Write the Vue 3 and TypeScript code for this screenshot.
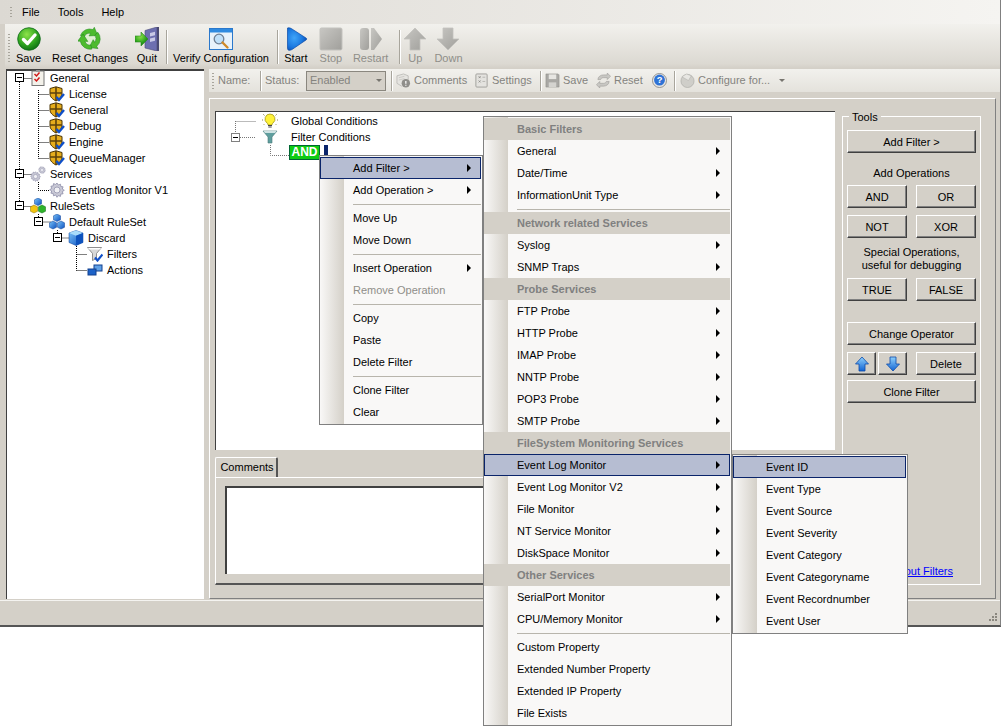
<script setup lang="ts">
type MenuRow = { t: 'item' | 'sep' | 'head'; label?: string; arrow?: boolean; active?: boolean; disabled?: boolean }
const it = (label: string, arrow = false, active = false, disabled = false): MenuRow => ({ t: 'item', label, arrow, active, disabled })
const sep: MenuRow = { t: 'sep' }
const head = (label: string): MenuRow => ({ t: 'head', label })

const contextMenu: MenuRow[] = [
  it('Add Filter >', true, true), it('Add Operation >', true), sep,
  it('Move Up'), it('Move Down'), sep,
  it('Insert Operation', true), it('Remove Operation', false, false, true), sep,
  it('Copy'), it('Paste'), it('Delete Filter'), sep,
  it('Clone Filter'), it('Clear')
]
const filterMenu: MenuRow[] = [
  head('Basic Filters'), it('General', true), it('Date/Time', true), it('InformationUnit Type', true), sep,
  head('Network related Services'), it('Syslog', true), it('SNMP Traps', true),
  head('Probe Services'), it('FTP Probe', true), it('HTTP Probe', true), it('IMAP Probe', true), it('NNTP Probe', true), it('POP3 Probe', true), it('SMTP Probe', true),
  head('FileSystem Monitoring Services'), it('Event Log Monitor', true, true), it('Event Log Monitor V2', true), it('File Monitor', true), it('NT Service Monitor', true), it('DiskSpace Monitor', true),
  head('Other Services'), it('SerialPort Monitor', true), it('CPU/Memory Monitor', true), sep,
  it('Custom Property'), it('Extended Number Property'), it('Extended IP Property'), it('File Exists')
]
const eventMenu: MenuRow[] = [
  it('Event ID', false, true), it('Event Type'), it('Event Source'), it('Event Severity'),
  it('Event Category'), it('Event Categoryname'), it('Event Recordnumber'), it('Event User')
]
const menus = [
  { cls: 'menu-context', rows: contextMenu },
  { cls: 'menu-filter', rows: filterMenu },
  { cls: 'menu-event', rows: eventMenu }
]

const treeRows = [
  { label: 'General', icon: 'i-check', depth: 0, box: true },
  { label: 'License', icon: 'i-shield', depth: 1 },
  { label: 'General', icon: 'i-shield', depth: 1 },
  { label: 'Debug', icon: 'i-shield', depth: 1 },
  { label: 'Engine', icon: 'i-shield', depth: 1 },
  { label: 'QueueManager', icon: 'i-shield', depth: 1 },
  { label: 'Services', icon: 'i-gears', depth: 0, box: true },
  { label: 'Eventlog Monitor V1', icon: 'i-gear', depth: 1 },
  { label: 'RuleSets', icon: 'i-cubes', depth: 0, box: true },
  { label: 'Default RuleSet', icon: 'i-bluecubes', depth: 1, box: true },
  { label: 'Discard', icon: 'i-cube', depth: 2, box: true },
  { label: 'Filters', icon: 'i-funnel', depth: 3 },
  { label: 'Actions', icon: 'i-actions', depth: 3 }
]
const treeBoxes = treeRows.flatMap((r, i) => (r.box ? [{ x: 8 + r.depth * 19, y: 4 + i * 16 }] : []))
</script>

<template>
  <div class="page">
    <svg class="defs" aria-hidden="true">
      <defs>
        <radialGradient id="gGreen" cx="40%" cy="30%" r="75%"><stop offset="0" stop-color="#8fe34a" /><stop offset="0.6" stop-color="#2fa51f" /><stop offset="1" stop-color="#0b6b12" /></radialGradient>
        <radialGradient id="gBlue" cx="35%" cy="45%" r="70%"><stop offset="0" stop-color="#3fa4f8" /><stop offset="0.6" stop-color="#1a78e0" /><stop offset="1" stop-color="#0a48ac" /></radialGradient>
        <linearGradient id="gGray" x1="0" y1="0" x2="1" y2="1"><stop offset="0" stop-color="#c8c7c3" /><stop offset="1" stop-color="#a09f9b" /></linearGradient>
        <linearGradient id="gCube" x1="0" y1="0" x2="1" y2="1"><stop offset="0" stop-color="#7cc4f8" /><stop offset="1" stop-color="#0a4fc0" /></linearGradient>
        <linearGradient id="gArrow" x1="0" y1="0" x2="0" y2="1"><stop offset="0" stop-color="#8fd0fb" /><stop offset="1" stop-color="#1164d4" /></linearGradient>
        <symbol id="i-save" viewBox="0 0 24 24">
          <circle cx="12" cy="12" r="11.3" fill="url(#gGreen)" stroke="#0d6a18" stroke-width=".8" />
          <path d="M6.5 12.5l4 4 7.5-8.5" fill="none" stroke="#fff" stroke-width="3.4" stroke-linecap="round" stroke-linejoin="round" />
        </symbol>
        <symbol id="i-reset" viewBox="0 0 24 24">
          <circle cx="12" cy="12" r="5" fill="#dff0d0" />
          <g id="rst-seg" fill="#4dbb2e" stroke="#1f8a1c" stroke-width=".5">
            <path d="M2.300 8.600A10 10 0 0 1 15 2.500L16.300.3 19.800 8.500 11 8.900 12.600 6.400A6 6 0 0 0 6.200 9.800z" />
          </g>
          <use href="#rst-seg" transform="rotate(120 12 12)" />
          <use href="#rst-seg" transform="rotate(240 12 12)" />
        </symbol>
        <symbol id="i-quit" viewBox="0 0 24 24">
          <path d="M10 3.500L22 0v24l-12-3z" fill="#6d6fb0" stroke="#4a4a7a" stroke-width=".6" />
          <path d="M22 0h2v24h-2z" fill="#4a4a72" />
          <path d="M15 6l5-1.300v3.500l-5 1.300zM15 11.500l5-1.300v3.500l-5 1.300z" fill="#c8c9e6" />
          <path d="M0 9h6V5l7 7-7 7v-4H0z" fill="url(#gGreen)" stroke="#2a8a1e" stroke-width=".6" />
        </symbol>
        <symbol id="i-verify" viewBox="0 0 24 24">
          <rect x=".5" y="1.500" width="23" height="21" fill="#e8f2fb" stroke="#2a78cc" />
          <rect x="1" y="2" width="22" height="3.500" fill="#2f8ae0" />
          <circle cx="10" cy="12" r="4.800" fill="#bfe0fa" stroke="#6f7f94" stroke-width="1.300" />
          <path d="M13.500 15.500l5 5" stroke="#d08a2a" stroke-width="2.400" stroke-linecap="round" />
        </symbol>
        <symbol id="i-start" viewBox="0 0 24 24"><path d="M3.500 1C5 .5 6.500 1 8 2l14 9c1 .7 1 1.300 0 2L8 22.500c-2 1.200-4.500 1.200-4.500-1z" fill="url(#gBlue)" stroke="#0a4aa8" stroke-width=".7" stroke-linejoin="round" /></symbol>
        <symbol id="i-stop" viewBox="0 0 24 24"><rect x="1" y="1" width="22" height="22" rx="1.500" fill="url(#gGray)" stroke="#c3c2be" /></symbol>
        <symbol id="i-restart" viewBox="0 0 24 24"><rect x="1" y="1" width="9" height="22" rx="3" fill="url(#gGray)" /><path d="M12 1h3l8 11-8 11h-3z" fill="url(#gGray)" /></symbol>
        <symbol id="i-up" viewBox="0 0 24 24"><path d="M12 1l11 11h-6v11H7V12H1z" fill="url(#gGray)" stroke="#c3c2be" stroke-width=".8" /></symbol>
        <symbol id="i-down" viewBox="0 0 24 24"><path d="M12 23L1 12h6V1h10v11h6z" fill="url(#gGray)" stroke="#c3c2be" stroke-width=".8" /></symbol>
        <symbol id="i-shield" viewBox="0 0 16 16">
          <path d="M1 2.500L7 .8l6 1.700v5.500c0 3-3 5.500-6 7-3-1.500-6-4-6-7z" fill="#e6ad1c" stroke="#4a3406" />
          <path d="M7 1v14M1 7h12" stroke="#5e430c" stroke-width="1.600" />
          <path d="M7.500 11l2.500 3 5-6" fill="none" stroke="#0f4fc8" stroke-width="2.400" />
        </symbol>
        <symbol id="i-check" viewBox="0 0 16 16">
          <rect x="2" y="1" width="12" height="14.500" fill="#f3f1ea" stroke="#777" />
          <rect x="6" y="0" width="4" height="2" fill="#999" />
          <path d="M4.500 4l2 2 3-3.500M4.500 9l2 2 3-3.500" fill="none" stroke="#d01818" stroke-width="1.500" />
        </symbol>
        <symbol id="i-gear" viewBox="0 0 16 16">
          <path d="M8 1l1.300 2 2.200-.8.300 2.300 2.300.3-.8 2.200 2 1.300-2 1.300.8 2.200-2.300.3-.3 2.300-2.200-.8L8 15.300 6.700 13l-2.200.8-.3-2.300-2.300-.3.8-2.200-2-1.300 2-1.300-.8-2.200 2.300-.3.300-2.300 2.200.8z" fill="#c9c9d6" stroke="#8383a0" stroke-width=".7" />
          <circle cx="8" cy="8" r="3" fill="#f0f0f4" stroke="#8a8aa5" stroke-width=".7" />
        </symbol>
        <symbol id="i-gears" viewBox="0 0 16 16">
          <use href="#i-gear" x="0" y="5" width="11" height="11" />
          <use href="#i-gear" x="8" y="0" width="8" height="8" />
        </symbol>
        <symbol id="i-cubes" viewBox="0 0 16 16">
          <path d="M8 0l3.500 1.800v4L8 7.500 4.500 5.800v-4z" fill="url(#gCube)" stroke="#0a3f96" stroke-width=".5" />
          <path d="M4 7l3.500 1.800v4.500L4 15 .5 13.300V8.800z" fill="#f2c40f" stroke="#8a6c04" stroke-width=".5" />
          <path d="M12 7l3.500 1.800v4.500L12 15l-3.500-1.700V8.800z" fill="#2fb32a" stroke="#0d6a12" stroke-width=".5" />
        </symbol>
        <symbol id="i-bluecubes" viewBox="0 0 16 16">
          <path d="M8 0l3.500 1.800v4L8 7.500 4.500 5.800v-4z" fill="url(#gCube)" stroke="#0a3f96" stroke-width=".5" />
          <path d="M4 7l3.500 1.800v4.500L4 15 .5 13.300V8.800z" fill="url(#gCube)" stroke="#0a3f96" stroke-width=".5" />
          <path d="M12 7l3.500 1.800v4.500L12 15l-3.500-1.700V8.800z" fill="url(#gCube)" stroke="#0a3f96" stroke-width=".5" />
        </symbol>
        <symbol id="i-cube" viewBox="0 0 16 16">
          <path d="M8 .5l7 2.500v9.500L8 15.500l-7-3V3z" fill="url(#gCube)" stroke="#0a3f96" stroke-width=".5" />
          <path d="M1 3l7 2.800L15 3 8 .5z" fill="#a8dcfb" />
          <path d="M8 5.800v9.700l7-3V3z" fill="#0d52bd" />
        </symbol>
        <symbol id="i-funnel" viewBox="0 0 16 16">
          <path d="M.5 1.500h14l-5 6v5l-4 2v-7z" fill="#d8d8d8" stroke="#777" stroke-width=".8" />
          <path d="M1 2h13l-1 1.500H2z" fill="#fff" />
          <path d="M8 11.500l2.500 3 5-6" fill="none" stroke="#0f4fc8" stroke-width="2.200" />
        </symbol>
        <symbol id="i-actions" viewBox="0 0 16 16">
          <rect x="7" y="3" width="8" height="6" fill="#5fa0e6" stroke="#12418f" />
          <rect x="1" y="7" width="8" height="6" fill="#1c62c8" stroke="#12418f" />
        </symbol>
        <symbol id="i-bulb" viewBox="0 0 16 16">
          <path d="M8 1a5 5 0 0 0-3 9c.6.500 1 1 1 2h4c0-1 .4-1.500 1-2a5 5 0 0 0-3-9z" fill="#fff23a" stroke="#9a8c10" stroke-width=".7" />
          <path d="M6 12.500h4M6.300 14h3.400" stroke="#444" stroke-width="1.200" />
          <path d="M1 1l1.500 1.500M15 1l-1.500 1.500M0 7h1.500M16 7h-1.500M1.500 12l1-1M14.500 12l-1-1" stroke="#6e6a20" stroke-width=".8" stroke-dasharray="1 .5" />
        </symbol>
        <symbol id="i-gfunnel" viewBox="0 0 16 16">
          <path d="M1 2h14l-5 6v6H6V8z" fill="#5f9e9e" stroke="#4a7a7a" stroke-width=".6" />
          <path d="M1.500 2h13l-1.500 2H3z" fill="#cfe3e3" />
        </symbol>
        <symbol id="i-comments" viewBox="0 0 16 16">
          <path d="M1 3l7-2 5 2v8l-7 3-5-3z" fill="#e6e5e1" stroke="#b5b4b0" stroke-width=".8" />
          <path d="M3 5l6-1.500M3 7.500l6-1.500" stroke="#c0bfbb" stroke-width=".7" />
          <circle cx="10.500" cy="11" r="4.500" fill="#8f8e8a" />
          <path d="M10.500 8.500v3M10.500 12.400v1.200" stroke="#fff" stroke-width="1.300" />
        </symbol>
        <symbol id="i-settings" viewBox="0 0 16 16">
          <rect x="2" y="1" width="12" height="14" rx="1" fill="#e4e3df" stroke="#a09f9b" />
          <path d="M5 3.500l2 2M7 3.500l-2 2M5 8l2 2M7 8l-2 2" stroke="#8e8d89" />
          <path d="M9 4.500h3M9 9h3" stroke="#b5b4b0" />
        </symbol>
        <symbol id="i-disk" viewBox="0 0 16 16">
          <path d="M1 1h13l1 1v13H1z" fill="#a9a8a4" stroke="#918f8b" stroke-width=".6" />
          <rect x="4" y="1.500" width="8" height="5" fill="#e7e6e2" />
          <rect x="4" y="10" width="8" height="5" fill="#d4d3cf" />
        </symbol>
        <symbol id="i-sync" viewBox="0 0 16 16">
          <path d="M2 7c0-3 3-5 6-5h4V0l3.500 3.500L12 7V5H8c-1.500 0-3 1-3 2z" fill="#c8c7c3" stroke="#9b9a96" stroke-width=".6" />
          <path d="M14 9c0 3-3 5-6 5H4v2L.5 12.500 4 9v2h4c1.500 0 3-1 3-2z" fill="#c8c7c3" stroke="#9b9a96" stroke-width=".6" />
        </symbol>
        <symbol id="i-cfg" viewBox="0 0 16 16">
          <circle cx="8" cy="8.500" r="7" fill="#cfcec9" stroke="#aaa9a5" stroke-width=".7" />
          <path d="M2 4l5-3 5 2-3 5z" fill="#e8e7e3" stroke="#aaa9a5" stroke-width=".5" />
        </symbol>
        <symbol id="i-uparrow" viewBox="0 0 16 16"><path d="M8 1l6.500 7H11v7H5V8H1.500z" fill="url(#gArrow)" stroke="#0d4aa8" stroke-width=".8" /></symbol>
        <symbol id="i-downarrow" viewBox="0 0 16 16"><path d="M8 15L1.500 8H5V1h6v7h3.500z" fill="url(#gArrow)" stroke="#0d4aa8" stroke-width=".8" /></symbol>
      </defs>
    </svg>

    <div class="win">
      <div class="menubar">
        <span class="grip"></span>
        <span class="mb-item">File</span>
        <span class="mb-item">Tools</span>
        <span class="mb-item">Help</span>
      </div>

      <div class="toolbar">
        <span class="grip tall"></span>
        <div class="tb-btn"><svg class="ic24"><use href="#i-save" /></svg><span>Save</span></div>
        <div class="tb-btn b-reset"><svg class="ic24"><use href="#i-reset" /></svg><span>Reset Changes</span></div>
        <div class="tb-btn b-quit"><svg class="ic24"><use href="#i-quit" /></svg><span>Quit</span></div>
        <span class="tb-sep s-a"></span>
        <div class="tb-btn"><svg class="ic24"><use href="#i-verify" /></svg><span>Verify Configuration</span></div>
        <span class="tb-sep s-b"></span>
        <div class="tb-btn"><svg class="ic24"><use href="#i-start" /></svg><span>Start</span></div>
        <div class="tb-btn off b-stop"><svg class="ic24"><use href="#i-stop" /></svg><span>Stop</span></div>
        <div class="tb-btn off b-restart"><svg class="ic24"><use href="#i-restart" /></svg><span>Restart</span></div>
        <span class="tb-sep s-c"></span>
        <div class="tb-btn off b-up"><svg class="ic24"><use href="#i-up" /></svg><span>Up</span></div>
        <div class="tb-btn off b-down"><svg class="ic24"><use href="#i-down" /></svg><span>Down</span></div>
      </div>

      <div class="body">
        <div class="tree">
          <svg class="tree-lines" width="196" height="280">
            <g stroke="#000" stroke-dasharray="1 1" fill="none">
              <path d="M12.500 8v128M12.500 8.500H26M12.500 104.500H26M12.500 136.500H26" />
              <path d="M31.500 20v68.500M31.500 24.500H42M31.500 40.500H42M31.500 56.500H42M31.500 72.500H42M31.500 88.500H42" />
              <path d="M31.500 112v8.500H42M31.500 144v8H44M50.500 160v8H62" />
              <path d="M69.500 176v24.500M69.500 184.500H80M69.500 200.500H80" />
            </g>
          </svg>
          <span v-for="(b, i) in treeBoxes" :key="i" class="tree-box" :style="{ left: b.x + 'px', top: b.y + 'px' }"></span>
          <div v-for="(r, i) in treeRows" :key="i" class="tree-row" :class="'d' + r.depth">
            <svg class="ic16"><use :href="'#' + r.icon" /></svg>
            <span>{{ r.label }}</span>
          </div>
        </div>

        <div class="right">
          <div class="subbar">
            <span class="grip short"></span>
            <span class="sb-dim w38">Name:</span>
            <span class="sb-sep"></span>
            <span class="sb-dim w41">Status:</span>
            <div class="combo"><span>Enabled</span><i class="caret"></i></div>
            <span class="sb-sep s1"></span>
            <svg class="ic15"><use href="#i-comments" /></svg><span class="sb-dim l w60">Comments</span>
            <svg class="ic15"><use href="#i-settings" /></svg><span class="sb-dim l w44">Settings</span>
            <span class="sb-sep s2"></span>
            <svg class="ic15"><use href="#i-disk" /></svg><span class="sb-dim l w33">Save</span>
            <svg class="ic15"><use href="#i-sync" /></svg><span class="sb-dim l w38">Reset</span>
            <svg class="ic15" viewBox="0 0 16 16">
              <circle cx="8" cy="8" r="7.500" fill="#e8e7e3" stroke="#7a7a7a" stroke-width=".8" />
              <circle cx="8" cy="7.500" r="5.800" fill="#2f73d6" />
              <text x="8" y="11" text-anchor="middle" class="qmark">?</text>
            </svg>
            <span class="sb-sep s3"></span>
            <svg class="ic15"><use href="#i-cfg" /></svg><span class="sb-dim l w80">Configure for...</span>
            <i class="caret cfg"></i>
          </div>

          <div class="panel">
            <div class="left-col">
              <div class="cond">
                <svg class="cond-lines" width="120" height="60">
                  <g stroke="#777" stroke-dasharray="1 1" fill="none">
                    <path d="M19.500 9v12M19.500 9.500H40M24 25.500H40M54.500 33v10.500H73" />
                  </g>
                </svg>
                <span class="cond-box"></span>
                <div class="cond-row"><svg class="ic16"><use href="#i-bulb" /></svg><span>Global Conditions</span></div>
                <div class="cond-row"><svg class="ic16"><use href="#i-gfunnel" /></svg><span>Filter Conditions</span></div>
                <div class="and-row"><span class="and">AND</span><span class="cursor"></span></div>
              </div>
              <div class="tab-wrap">
                <div class="tab">Comments</div>
                <div class="tab-pane"><div class="textbox"></div></div>
              </div>
            </div>

            <div class="tools">
              <span class="legend">Tools</span>
              <button class="btn wide">Add Filter &gt;</button>
              <div class="cap c1">Add Operations</div>
              <div class="pair"><button class="btn">AND</button><button class="btn">OR</button></div>
              <div class="pair p7"><button class="btn">NOT</button><button class="btn">XOR</button></div>
              <div class="cap c2">Special Operations,<br />useful for debugging</div>
              <div class="pair"><button class="btn">TRUE</button><button class="btn">FALSE</button></div>
              <button class="btn wide chg">Change Operator</button>
              <div class="pair p7">
                <div class="arrows">
                  <button class="btn ar"><svg class="ic16"><use href="#i-uparrow" /></svg></button>
                  <button class="btn ar"><svg class="ic16"><use href="#i-downarrow" /></svg></button>
                </div>
                <button class="btn">Delete</button>
              </div>
              <button class="btn wide p5">Clone Filter</button>
              <a class="link">Learn about Filters</a>
            </div>
          </div>
        </div>
      </div>

      <div class="status"><svg class="sizer" width="12" height="12"><g fill="#8a877f"><rect x="9" y="1" width="2" height="2" /><rect x="6" y="4" width="2" height="2" /><rect x="9" y="4" width="2" height="2" /><rect x="3" y="7" width="2" height="2" /><rect x="6" y="7" width="2" height="2" /><rect x="9" y="7" width="2" height="2" /></g></svg></div>
    </div>

    <div v-for="m in menus" :key="m.cls" class="menu" :class="m.cls">
      <template v-for="(r, i) in m.rows" :key="i">
        <div v-if="r.t === 'sep'" class="m-sep"><span></span></div>
        <div v-else-if="r.t === 'head'" class="m-head">{{ r.label }}</div>
        <div v-else class="m-item" :class="{ active: r.active, disabled: r.disabled }">
          <span>{{ r.label }}</span><i v-if="r.arrow" class="m-arrow"></i>
        </div>
      </template>
    </div>
  </div>
</template>

<style scoped>
.page { position: relative; width: 1006px; height: 728px; font: 11px/13px "Liberation Sans", Tahoma, sans-serif; color: #000; background: #fff; overflow: hidden; }
.win { width: 1001px; height: 627px; box-sizing: border-box; background: #d4d0c8; border-right: 1px solid #808080; border-bottom: 2px solid #555; display: flex; flex-direction: column; }
.defs { position: absolute; width: 0; height: 0; }
.grip { display: block; flex: none; width: 2px; height: 12px; background-image: radial-gradient(circle, #a8a59c 1px, transparent 1px); background-size: 2px 3px; }
.grip.tall { height: 30px; margin-top: 6px; margin-right: 1px; }
.grip.short { height: 18px; margin-right: 4px; }
.menubar { height: 24px; flex: none; display: flex; align-items: center; padding-left: 10px; background: linear-gradient(90deg, #dcd9d3, #f5f4f1); }
.mb-item { margin-right: 18px; }
.mb-item:nth-child(2) { margin-left: 10px; }
.toolbar { height: 44px; flex: none; box-sizing: border-box; display: flex; padding: 3px 0 0 3px; margin-left: 5px; background: linear-gradient(180deg, #f2f1ed, #dcd9d2 90%, #d4d0c8); }
.tb-btn { display: flex; flex-direction: column; align-items: center; margin: 0 5px; white-space: nowrap; line-height: 14px; }
.tb-btn.off { color: #8f8e89; }
.b-reset { margin-left: 6px; margin-right: 3px; }
.b-quit { margin-left: 4px; }
.b-stop { margin-left: 6px; }
.b-restart { margin-left: 5px; }
.b-up { margin-left: 2px; margin-right: 0; }
.b-down { margin-left: 7px; }
.tb-sep { width: 2px; box-sizing: border-box; height: 34px; margin: 3px 0 0 2px; background: #a8a59c; border-right: 1px solid #fff; flex: none; }
.tb-sep.s-b { margin-left: 3px; }
.tb-sep.s-c { margin-left: 6px; }
.ic24 { width: 24px; height: 24px; display: block; }
.ic16 { width: 16px; height: 16px; display: block; flex: none; }
.ic15 { width: 15px; height: 15px; display: block; flex: none; }
.body { flex: 1; display: flex; min-height: 0; padding-left: 6px; gap: 4px; }
.tree { position: relative; width: 199px; box-sizing: border-box; background: #fff; box-shadow: inset 0 2px 0 #404040; border-left: 1px solid #404040; border-right: 1px solid #d4d0c8; margin-top: 1px; margin-bottom: 1px; padding-top: 1px; }
.tree-lines { position: absolute; left: 0; top: 1px; }
.tree-box { position: absolute; width: 9px; height: 9px; box-sizing: border-box; border: 1px solid #000; background: linear-gradient(#000, #000) center / 5px 1px no-repeat #fff; }
.tree-row { position: relative; height: 16px; display: flex; align-items: center; gap: 4px; white-space: nowrap; }
.tree-row.d0 { padding-left: 23px; }
.tree-row.d1 { padding-left: 42px; }
.tree-row.d2 { padding-left: 61px; }
.tree-row.d3 { padding-left: 80px; }
.right { flex: 1; min-width: 0; display: flex; flex-direction: column; }
.subbar { height: 23px; flex: none; box-sizing: border-box; display: flex; align-items: center; padding: 0 0 0 3px; background: linear-gradient(180deg, #f2f1ed, #e4e2dc); white-space: nowrap; margin-top: 1px; }
.sb-dim { color: #84837e; flex: none; }
.sb-dim.l { margin-left: 3px; }
.w33 { width: 33px; } .w38 { width: 38px; } .w41 { width: 41px; } .w44 { width: 44px; } .w60 { width: 60px; } .w80 { width: 80px; }
.sb-sep { width: 2px; box-sizing: border-box; height: 20px; margin: 0 3px 0 4px; background: #a8a59c; border-right: 1px solid #fff; flex: none; }
.sb-sep.s1 { margin: 0 3px 0 5px; }
.sb-sep.s2 { margin: 0 3px 0 4px; }
.sb-sep.s3 { margin: 0 4px 0 7px; }
.combo { width: 80px; height: 20px; flex: none; box-sizing: border-box; display: flex; align-items: center; justify-content: space-between; padding: 0 3px; border: 1px solid #8a877f; color: #84837e; background: #d4d0c8; }
.caret { width: 0; height: 0; border: 3px solid transparent; border-top: 3px solid #77756f; border-bottom: 0; display: block; }
.caret.cfg { margin-left: 1px; }
.qmark { font: 700 10px "Liberation Sans", sans-serif; fill: #fff; }
.panel { flex: 1; min-height: 0; box-sizing: border-box; margin-top: 6px; display: flex; gap: 7px; padding: 12px 5px 13px 5px; border-left: 1px solid #fff; border-top: 1px solid #fff; border-right: 1px solid #808080; border-bottom: 1px solid #808080; margin-right: 4px; margin-bottom: 1px; }
.left-col { width: 620px; flex: none; display: flex; flex-direction: column; }
.cond { position: relative; height: 339px; box-sizing: border-box; background: #fff; border-top: 1px solid #404040; border-left: 1px solid #404040; padding: 1px 0 0 46px; }
.cond-lines { position: absolute; left: 0; top: 0; }
.cond-box { position: absolute; left: 15px; top: 21px; width: 9px; height: 9px; box-sizing: border-box; border: 1px solid #808080; background: linear-gradient(#000, #000) center / 5px 1px no-repeat #fff; }
.cond-row { position: relative; height: 16px; display: flex; align-items: center; gap: 13px; white-space: nowrap; }
.and-row { position: relative; display: flex; margin-left: 27px; gap: 4px; }
.and { width: 31px; height: 15px; box-sizing: border-box; background: #0ecb12; border: 1px solid #063; color: #fff; font-weight: 700; font-size: 12px; line-height: 13px; text-align: center; }
.cursor { width: 4px; height: 11px; background: #0a246a; }
.tab-wrap { flex: 1; display: flex; flex-direction: column; margin-top: 7px; min-height: 0; }
.tab { width: 63px; height: 20px; box-sizing: border-box; text-align: center; line-height: 17px; padding: 1px 0 0 2px; border-top: 1px solid #fff; border-left: 1px solid #fff; border-right: 2px solid #555; border-radius: 2px 2px 0 0; background: #d4d0c8; }
.tab-pane { flex: 1; box-sizing: border-box; padding: 8px 10px 9px 9px; border-top: 1px solid #fff; border-left: 1px solid #fff; border-bottom: 2px solid #555; border-right: 2px solid #555; }
.textbox { height: 100%; box-sizing: border-box; background: #fff; border-top: 2px solid #404040; border-left: 2px solid #404040; }
.tools { position: relative; width: 139px; flex: none; box-sizing: border-box; margin-top: 5px; padding: 13px 4px 0 4px; border: 1px solid #fff; text-align: center; }
.legend { position: absolute; left: 6px; top: -6px; background: #d4d0c8; padding: 0 3px; }
.btn { display: block; box-sizing: border-box; width: 60px; height: 23px; padding: 1px 0 0; font: inherit; color: #000; background: #d4d0c8; border: 1px solid; border-color: #fff #404040 #404040 #fff; box-shadow: inset -1px -1px 0 #808080; }
.btn.wide { width: 129px; }
.cap { text-align: center; }
.cap.c1 { margin: 14px 0 5px; }
.cap.c2 { margin: 8px 0 6px; }
.pair { display: flex; justify-content: space-between; width: 129px; }
.p7 { margin-top: 7px; }
.p5 { margin-top: 5px; }
.chg { margin-top: 21px; }
.arrows { display: flex; width: 60px; justify-content: space-between; }
.btn.ar { width: 29px; display: flex; align-items: center; justify-content: center; padding: 0; }
.link { position: absolute; right: 27px; bottom: 6px; color: #0000ff; text-decoration: underline; white-space: nowrap; }
.status { height: 25px; flex: none; box-sizing: border-box; display: flex; justify-content: flex-end; align-items: flex-end; border-top: 1px solid #f4f3f0; }
.sizer { margin: 0 2px 1px 0; }
.menu { position: absolute; box-sizing: border-box; padding: 1px 1px 1px 0; border: 1px solid #808080; background: linear-gradient(90deg, #f9f8f7 0, #d4d0c8 24px, #f9f8f7 24px); z-index: 5; }
.menu-context { left: 319px; top: 155px; width: 164px; }
.menu-filter { left: 483px; top: 116px; width: 249px; }
.menu-event { left: 732px; top: 454px; width: 176px; }
.m-item { position: relative; height: 22px; display: flex; align-items: center; padding-left: 33px; box-sizing: border-box; white-space: nowrap; }
.m-item.active { background: #b6bdd2; outline: 1px solid #0a246a; outline-offset: -1px; }
.m-item.disabled { color: #8f8e89; }
.m-arrow { position: absolute; right: 10px; top: 7px; width: 0; height: 0; border: 4px solid transparent; border-left: 4px solid #000; border-right: 0; }
.m-sep { height: 6px; display: flex; align-items: center; padding-left: 33px; }
.m-sep span { display: block; flex: 1; height: 1px; background: #b8b5ac; }
.m-head { height: 22px; line-height: 22px; padding-left: 33px; background: #d4d0c8; color: #808080; font-weight: 700; white-space: nowrap; }
</style>
<style>
html, body { background: #fff; }
</style>
